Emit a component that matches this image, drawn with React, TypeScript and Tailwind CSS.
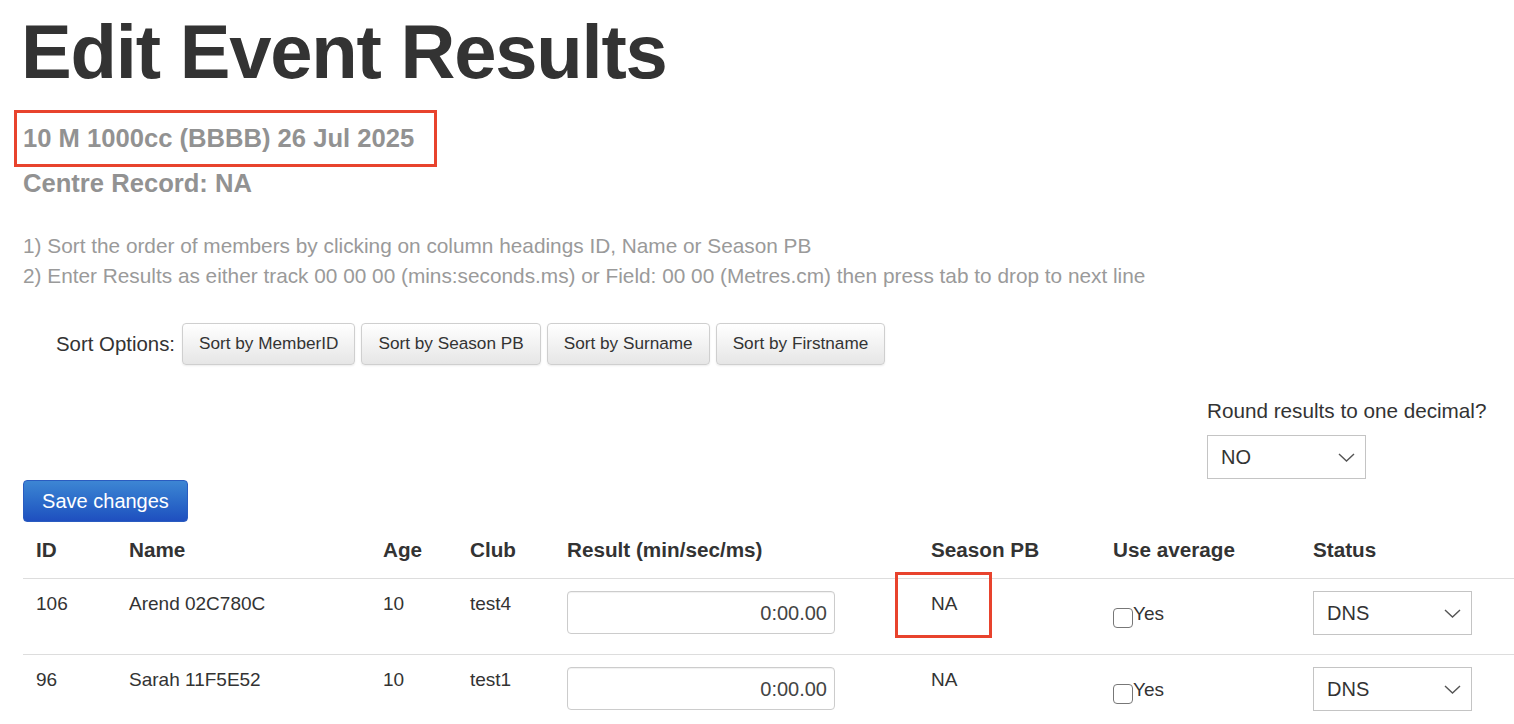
import React from 'react'

const font = { fontFamily: '"Liberation Sans", Arial, Helvetica, sans-serif' }

const rows = [
  { id: '106', name: 'Arend 02C780C', age: '10', club: 'test4', result: '0:00.00', pb: 'NA', status: 'DNS' },
  { id: '96', name: 'Sarah 11F5E52', age: '10', club: 'test1', result: '0:00.00', pb: 'NA', status: 'DNS' },
]

const sortButtons = ['Sort by MemberID', 'Sort by Season PB', 'Sort by Surname', 'Sort by Firstname']

function Chevron() {
  return (
    <svg width="17" height="9" viewBox="0 0 17 9" fill="none" className="shrink-0">
      <path d="M1 1l7.5 7L16 1" stroke="#555" strokeWidth="1.4" />
    </svg>
  )
}

function SelectBox({ value }: { value: string }) {
  return (
    <div className="flex h-[44px] w-[159px] items-center justify-between border border-[#c4c4c4] bg-white pl-[13px] pr-[10px] text-[20px] text-[#333]">
      <span>{value}</span>
      <Chevron />
    </div>
  )
}

export default function App() {
  return (
    <div style={font} className="min-h-screen overflow-hidden bg-white pl-[23px] text-[#333]">
      <h1 className="ml-[-2px] pt-[14px] text-[76px] font-bold leading-none tracking-[-1.2px] text-[#333]">
        Edit Event Results
      </h1>

      {/* event title with highlight */}
      <div className="ml-[-9px] mt-[20px] flex h-[57px] w-[423px] items-center border-[3px] border-[#e8432d] pl-[6px]">
        <h3 className="text-[25.6px] font-bold text-[#929292]">10 M 1000cc (BBBB) 26 Jul 2025</h3>
      </div>
      <h3 className="mt-[2px] text-[25.6px] font-bold leading-[28px] text-[#929292]">Centre Record: NA</h3>

      <div className="mt-[34px] text-[20.8px] leading-[30px] text-[#9a9a9a]">
        <p>1) Sort the order of members by clicking on column headings ID, Name or Season PB</p>
        <p>2) Enter Results as either track 00 00 00 (mins:seconds.ms) or Field: 00 00 (Metres.cm) then press tab to drop to next line</p>
      </div>

      <div className="ml-[33px] mt-[32px] flex items-center gap-[6px]">
        <span className="mr-[1px] text-[20.4px] text-[#333]">Sort Options:</span>
        {sortButtons.map((b) => (
          <button
            key={b}
            className="h-[42px] rounded-[4px] border border-[#cfcfcf] bg-gradient-to-b from-white to-[#e6e6e6] px-[16px] text-[17.2px] text-[#333] shadow-[0_1px_2px_rgba(0,0,0,0.08)]"
          >
            {b}
          </button>
        ))}
      </div>

      <div className="mr-[27px] mt-[33px] flex justify-end">
        <div className="w-[280px]">
          <p className="whitespace-nowrap text-[20.7px] leading-[26px] text-[#333]">Round results to one decimal?</p>
          <div className="mt-[11px]">
            <SelectBox value="NO" />
          </div>
        </div>
      </div>

      <button className="mt-[1px] h-[42px] w-[165px] rounded-[4px] border border-[#2a5cc0] bg-gradient-to-b from-[#3d86d3] to-[#1f4fbf] text-[20px] text-white">
        Save changes
      </button>

      <table className="mt-[8px] w-full table-fixed border-collapse text-left text-[19px]">
        <colgroup>
          <col className="w-[93px]" />
          <col className="w-[254px]" />
          <col className="w-[87px]" />
          <col className="w-[97px]" />
          <col className="w-[364px]" />
          <col className="w-[182px]" />
          <col className="w-[200px]" />
          <col />
        </colgroup>
        <thead>
          <tr className="border-b border-[#dddddd]">
            {['ID', 'Name', 'Age', 'Club', 'Result (min/sec/ms)', 'Season PB', 'Use average', 'Status'].map((h) => (
              <th key={h} className="pb-[15px] pl-[13px] pt-[7px] text-[20.7px] font-bold leading-[26px]">
                {h}
              </th>
            ))}
          </tr>
        </thead>
        <tbody>
          {rows.map((r, i) => (
            <tr key={r.id} className="h-[76px] border-b border-[#dddddd] align-top">
              <td className="pl-[13px] pt-[12px] leading-[26px]">{r.id}</td>
              <td className="pl-[13px] pt-[12px] leading-[26px]">{r.name}</td>
              <td className="pl-[13px] pt-[12px] leading-[26px]">{r.age}</td>
              <td className="pl-[13px] pt-[12px] leading-[26px]">{r.club}</td>
              <td className="pl-[13px] pt-[12px]">
                <div className="flex h-[43px] w-[268px] items-center justify-end rounded-[4px] border border-[#cccccc] pr-[7px] text-[20px] text-[#444] shadow-[inset_0_1px_1px_rgba(0,0,0,0.06)]">
                  {r.result}
                </div>
              </td>
              <td className="pl-[13px] pt-[12px] leading-[26px]">
                <span className="relative">
                  {r.pb}
                  {i === 0 && (
                    <span className="absolute left-[-36px] top-[-21px] h-[66px] w-[97px] border-[3px] border-[#e8432d]" />
                  )}
                </span>
              </td>
              <td className="pl-[13px] pt-[22px]">
                <label className="flex items-start">
                  <span className="mt-[7px] h-[20px] w-[20px] rounded-[4px] border-[1.5px] border-[#777]" />
                  <span className="leading-[26px]">Yes</span>
                </label>
              </td>
              <td className="pl-[13px] pt-[12px]">
                <SelectBox value={r.status} />
              </td>
            </tr>
          ))}
        </tbody>
      </table>
    </div>
  )
}
